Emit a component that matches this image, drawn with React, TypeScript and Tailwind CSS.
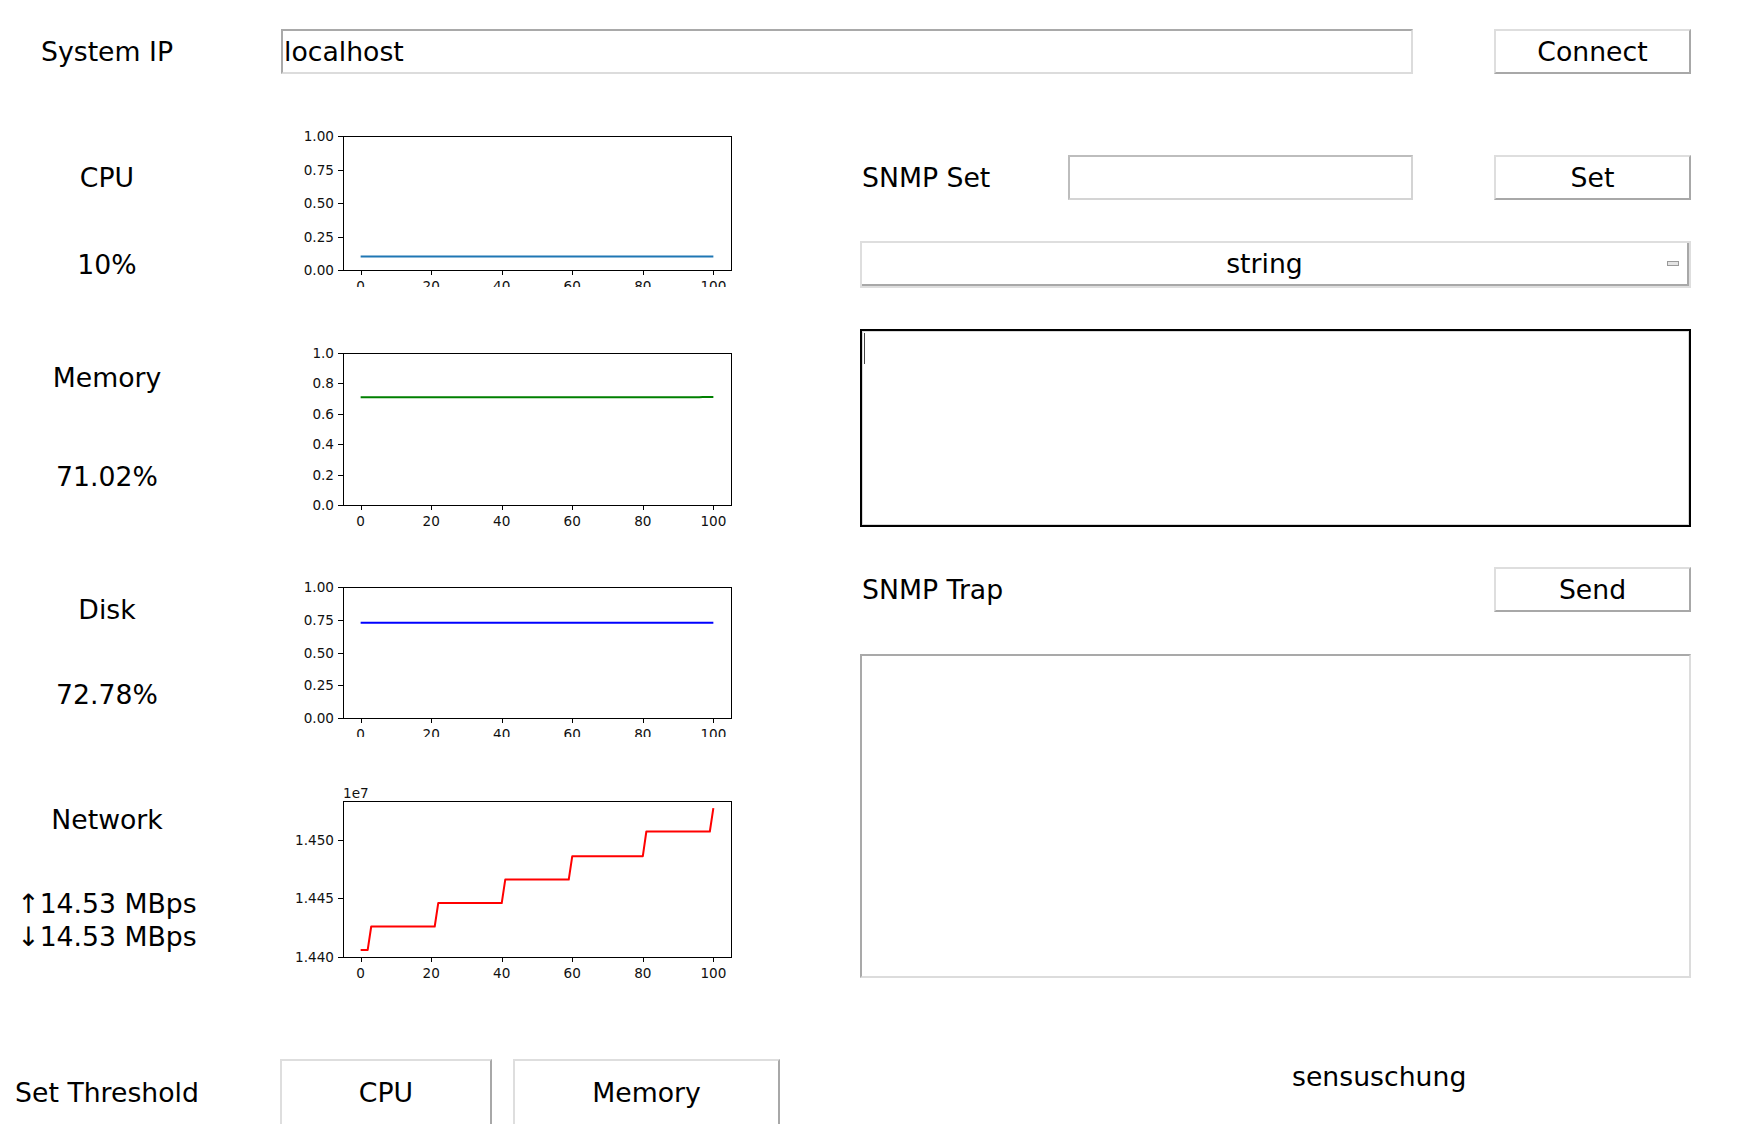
import React from "react";

interface ChartProps {
  height: number;
  axTop: number;
  axBot: number;
  yMin: number;
  yMax: number;
  ticks: number[];
  digits: number;
  data: number[];
  color: string;
  offsetText?: string;
}

// matplotlib-looking line chart, axes drawn in px relative to its row
function Chart({ height, axTop, axBot, yMin, yMax, ticks, digits, data, color, offsetText }: ChartProps) {
  const axLeft = 63;
  const axRight = 451;
  const px = (i: number) => axLeft + ((i + 5) * (axRight - axLeft)) / 110;
  const py = (v: number) => axBot - ((v - yMin) / (yMax - yMin)) * (axBot - axTop);
  const points = data.map((v, i) => `${px(i).toFixed(2)},${py(v).toFixed(2)}`).join(" ");

  return (
    <svg width={460} height={height} className="ml-[66px] shrink-0" fontFamily="DejaVu Sans, sans-serif">
      {ticks.map((t) => (
        <g key={t}>
          <line x1={58} x2={63} y1={Math.round(py(t)) + 0.5} y2={Math.round(py(t)) + 0.5} stroke="#000" strokeWidth={1} />
          <text x={54} y={py(t)} fontSize={13.6} textAnchor="end" dominantBaseline="central" fill="#111">
            {t.toFixed(digits)}
          </text>
        </g>
      ))}
      {[0, 20, 40, 60, 80, 100].map((t) => (
        <g key={t}>
          <line x1={Math.round(px(t)) + 0.5} x2={Math.round(px(t)) + 0.5} y1={axBot} y2={axBot + 5} stroke="#000" strokeWidth={1} />
          <text x={px(t)} y={axBot + 16} fontSize={13.6} textAnchor="middle" dominantBaseline="central" fill="#111">
            {t}
          </text>
        </g>
      ))}
      {offsetText && (
        <text x={axLeft} y={axTop - 8} fontSize={13.6} dominantBaseline="central" fill="#111">
          {offsetText}
        </text>
      )}
      <polyline points={points} fill="none" stroke={color} strokeWidth={2} strokeLinejoin="round" />
      <rect
        x={axLeft + 0.5}
        y={axTop + 0.5}
        width={axRight - axLeft}
        height={axBot - axTop}
        fill="none"
        stroke="#000"
        strokeWidth={1}
      />
    </svg>
  );
}

const range = (n: number) => Array.from({ length: n }, (_, i) => i);

const cpuData = range(101).map(() => 0.1);
const memData = range(101).map((i) => (i < 33 ? 0.7095 : i < 97 ? 0.7082 : 0.7112));
const diskData = range(101).map(() => 0.7278);
const netData = range(101).map((i) => {
  if (i <= 2) return 1.4406;
  if (i <= 21) return 1.4426;
  if (i <= 40) return 1.4446;
  if (i <= 59) return 1.4466;
  if (i <= 80) return 1.4486;
  if (i <= 99) return 1.4507;
  return 1.4527;
});

function KvButton({ label, className }: { label: string; className: string }) {
  return (
    <button
      className={
        "flex items-center justify-center bg-white border-2 border-[#dedede] border-r-[#a8a8a8] border-b-[#a8a8a8] leading-[32px] " +
        className
      }
    >
      {label}
    </button>
  );
}

export default function App() {
  return (
    <div className="w-[1750px] h-[1124px] overflow-hidden bg-white text-black font-['DejaVu_Sans',sans-serif] text-[26.7px] leading-[32px]">
      {/* top row */}
      <div className="flex items-center h-[103px]">
        <div className="w-[214px] text-center">System IP</div>
        <div className="ml-[67px] w-[1132px] h-[45px] flex items-center pl-[1px] border-2 border-[#a9a9a9] border-r-[#dcdcdc] border-b-[#dcdcdc]">
          localhost
        </div>
        <KvButton label="Connect" className="ml-[81px] w-[197px] h-[45px]" />
      </div>

      <div className="flex">
        {/* monitor rows */}
        <div className="flex flex-col w-[740px]">
          <div className="flex items-start h-[200px]">
            <div className="w-[214px] flex flex-col items-center pt-[59px]">
              <div>CPU</div>
              <div className="mt-[55px]">10%</div>
            </div>
            <Chart
              height={184}
              axTop={33}
              axBot={167}
              yMin={0}
              yMax={1}
              ticks={[0, 0.25, 0.5, 0.75, 1]}
              digits={2}
              data={cpuData}
              color="#1f77b4"
            />
          </div>

          <div className="flex items-start h-[242px]">
            <div className="w-[214px] flex flex-col items-center pt-[59px]">
              <div>Memory</div>
              <div className="mt-[67px]">71.02%</div>
            </div>
            <Chart
              height={242}
              axTop={50}
              axBot={202}
              yMin={0}
              yMax={1}
              ticks={[0, 0.2, 0.4, 0.6, 0.8, 1]}
              digits={1}
              data={memData}
              color="#008000"
            />
          </div>

          <div className="flex items-start h-[215px]">
            <div className="w-[214px] flex flex-col items-center pt-[49px]">
              <div>Disk</div>
              <div className="mt-[53px]">72.78%</div>
            </div>
            <Chart
              height={192}
              axTop={42}
              axBot={173}
              yMin={0}
              yMax={1}
              ticks={[0, 0.25, 0.5, 0.75, 1]}
              digits={2}
              data={diskData}
              color="#0000ff"
            />
          </div>

          <div className="flex items-start h-[240px]">
            <div className="w-[214px] flex flex-col items-center pt-[44px]">
              <div>Network</div>
              <div className="mt-[51px] leading-[33px] text-center">
                <div>↑14.53 MBps</div>
                <div>↓14.53 MBps</div>
              </div>
            </div>
            <Chart
              height={240}
              axTop={41}
              axBot={197}
              yMin={1.44}
              yMax={1.4533}
              ticks={[1.44, 1.445, 1.45]}
              digits={3}
              data={netData}
              color="#ff0000"
              offsetText="1e7"
            />
          </div>
        </div>

        {/* snmp panel */}
        <div className="ml-[120px] w-[831px] flex flex-col pt-[52px]">
          <div className="flex items-center h-[45px]">
            <div className="w-[208px] pl-[2px]">SNMP Set</div>
            <div className="w-[345px] h-full border-2 border-[#d4d4d4] border-t-[#bdbdbd] border-l-[#bdbdbd]" />
            <KvButton label="Set" className="ml-[81px] w-[197px] h-full" />
          </div>

          <div className="mt-[41px] h-[47px] flex items-center border-2 border-[#dedede] bg-white">
            <div className="flex-1 h-full flex items-center border-r-2 border-b-2 border-[#a8a8a8]">
              <div className="flex-1 text-center">string</div>
              <div className="w-[12px] h-[5px] mr-[8px] border border-[#9a9a9a] bg-[#e4e4e4]" />
            </div>
          </div>

          <div className="mt-[41px] h-[198px] border-2 border-black">
            <div className="h-full border border-[#d8d8d8] pt-[1px] pl-[1px]">
              <div className="w-[1px] h-[31px] bg-[#444]" />
            </div>
          </div>

          <div className="mt-[40px] flex items-center justify-between h-[45px]">
            <div className="pl-[2px]">SNMP Trap</div>
            <KvButton label="Send" className="w-[197px] h-full" />
          </div>

          <div className="mt-[42px] h-[324px] border-2 border-[#a9a9a9] border-r-[#dcdcdc] border-b-[#dcdcdc]" />
        </div>
      </div>

      {/* bottom row */}
      <div className="flex items-start h-[124px]">
        <div className="w-[214px] text-center pt-[77px]">Set Threshold</div>
        <KvButton label="CPU" className="ml-[66px] mt-[59px] w-[212px] h-[68px]" />
        <KvButton label="Memory" className="ml-[21px] mt-[59px] w-[267px] h-[68px]" />
        <div className="ml-[512px] mt-[61px]">sensuschung</div>
      </div>
    </div>
  );
}
